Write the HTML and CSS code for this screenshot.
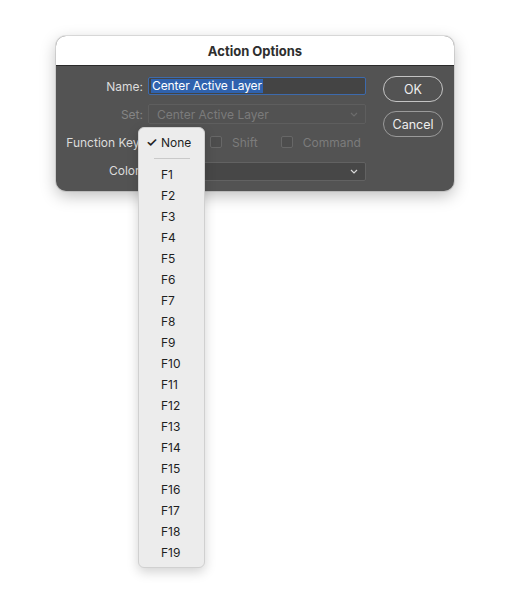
FILE: index.html
```html
<!DOCTYPE html>
<html>
<head>
<meta charset="utf-8">
<link rel="stylesheet" href="styles.css">
</head>
<body>
<div class="dialog">
  <div class="titlebar">Action Options</div>
  <div class="content">
    <div class="form">
      <div class="lbl">Name:</div>
      <div class="field input focus"><span class="sel">Center Active Layer</span></div>

      <div class="lbl dim">Set:</div>
      <div class="field select disabled">
        <span>Center Active Layer</span>
        <svg class="chev" viewBox="0 0 8 5" width="8" height="5"><path d="M1 1l3 3 3-3" fill="none" stroke="currentColor" stroke-width="1.2"/></svg>
      </div>

      <div class="lbl">Function Key:</div>
      <div class="fkrow">
        <div class="field mini"></div>
        <span class="check"><span class="box"></span>Shift</span>
        <span class="check"><span class="box"></span>Command</span>
      </div>

      <div class="lbl">Color:</div>
      <div class="field select color">
        <span></span>
        <svg class="chev" viewBox="0 0 8 5" width="8" height="5"><path d="M1 1l3 3 3-3" fill="none" stroke="currentColor" stroke-width="1.2"/></svg>
      </div>
    </div>
    <div class="buttons">
      <div class="btn">OK</div>
      <div class="btn">Cancel</div>
    </div>
  </div>

  <div class="menu">
    <div class="item checked"><span class="tick">✓</span>None</div>
    <div class="sep"></div>
    <div class="item">F1</div>
    <div class="item">F2</div>
    <div class="item">F3</div>
    <div class="item">F4</div>
    <div class="item">F5</div>
    <div class="item">F6</div>
    <div class="item">F7</div>
    <div class="item">F8</div>
    <div class="item">F9</div>
    <div class="item">F10</div>
    <div class="item">F11</div>
    <div class="item">F12</div>
    <div class="item">F13</div>
    <div class="item">F14</div>
    <div class="item">F15</div>
    <div class="item">F16</div>
    <div class="item">F17</div>
    <div class="item">F18</div>
    <div class="item">F19</div>
  </div>
</div>
</body>
</html>
```

FILE: styles.css
```css
html, body {
  margin: 0;
  padding: 0;
  background: #ffffff;
  font-family: "Inter", "Noto Sans", sans-serif;
  font-size: 12px;
}

body {
  min-height: 591px;
  padding-top: 36px;
  box-sizing: border-box;
}

.dialog {
  position: relative;
  width: 398px;
  margin: 0 0 0 56px;
  background: #535353;
  border-radius: 10px;
  box-shadow: 0 0 0 1px rgba(0,0,0,0.1), 0 5px 16px rgba(0,0,0,0.25);
}

.titlebar {
  height: 29px;
  line-height: 31px;
  background: #ffffff;
  border-radius: 10px 10px 0 0;
  border-bottom: 1px solid #2a2a2a;
  text-align: center;
  font-weight: 700;
  font-size: 13px;
  color: #2e2e2e;
}

.content {
  display: flex;
  padding: 6px 11px 7px 0;
}

.form {
  display: grid;
  grid-template-columns: 87px 218px;
  grid-auto-rows: 28px;
  column-gap: 5px;
  align-items: center;
}

.lbl {
  text-align: right;
  color: #dcdcdc;
  white-space: nowrap;
}

.lbl.dim {
  color: #858585;
}

.field {
  box-sizing: border-box;
  display: flex;
  align-items: center;
  padding: 0 3px;
  color: #e6e6e6;
  border-radius: 2px;
}

.input {
  height: 18px;
  background: #444444;
  border: 1px solid #3d6aac;
}

.sel {
  background: #2f62ae;
  color: #ffffff;
  line-height: 14px;
  padding: 0 1px;
  margin-left: -1px;
  letter-spacing: -0.1px;
}

.select {
  height: 20px;
  justify-content: space-between;
  padding: 0 7px 0 8px;
}

.select.disabled {
  background: #525252;
  border: 1px solid #5e5e5e;
  color: #7b7b7b;
}

.select.disabled .chev {
  color: #6c6c6c;
}

.select.color {
  height: 19px;
  margin-top: 2px;
  background: #474747;
  border: 1px solid #626262;
}

.select.color .chev {
  color: #d8d8d8;
}

.fkrow {
  display: flex;
  align-items: center;
}

.mini {
  flex-shrink: 0;
  width: 52px;
  height: 19px;
  background: #474747;
  border: 1px solid #626262;
  margin-right: 10px;
}

.check {
  flex-shrink: 0;
  display: flex;
  align-items: center;
  color: #7c7c7c;
  margin-right: 23px;
}

.check:last-child {
  margin-right: 0;
}

.box {
  box-sizing: border-box;
  width: 12px;
  height: 12px;
  border: 1px solid #676767;
  border-radius: 2px;
  background: #4d4d4d;
  margin-right: 10px;
}

.buttons {
  display: flex;
  flex-direction: column;
  gap: 9px;
  margin-left: 17px;
  padding-top: 4px;
}

.btn {
  box-sizing: border-box;
  width: 60px;
  height: 26px;
  border: 1px solid #c4c4c4;
  border-radius: 13px;
  color: #eeeeee;
  font-size: 12.5px;
  display: flex;
  align-items: center;
  justify-content: center;
}

.btn + .btn {
  border-color: #9a9a9a;
}

.menu {
  position: absolute;
  left: 82px;
  top: 91px;
  width: 67px;
  box-sizing: border-box;
  padding: 4px 0 4px;
  background: #ececec;
  border: 1px solid #d0d0d0;
  border-radius: 6px;
  box-shadow: 0 4px 12px rgba(0,0,0,0.18);
  z-index: 2;
}

.item {
  height: 21px;
  line-height: 21px;
  padding-left: 22px;
  color: #1f1f1f;
  position: relative;
}

.tick {
  position: absolute;
  left: 7px;
  top: 0;
  font-size: 13px;
  font-weight: 600;
}

.sep {
  height: 1px;
  background: #c9c9c9;
  margin: 5px 14px 5px 15px;
}
```
